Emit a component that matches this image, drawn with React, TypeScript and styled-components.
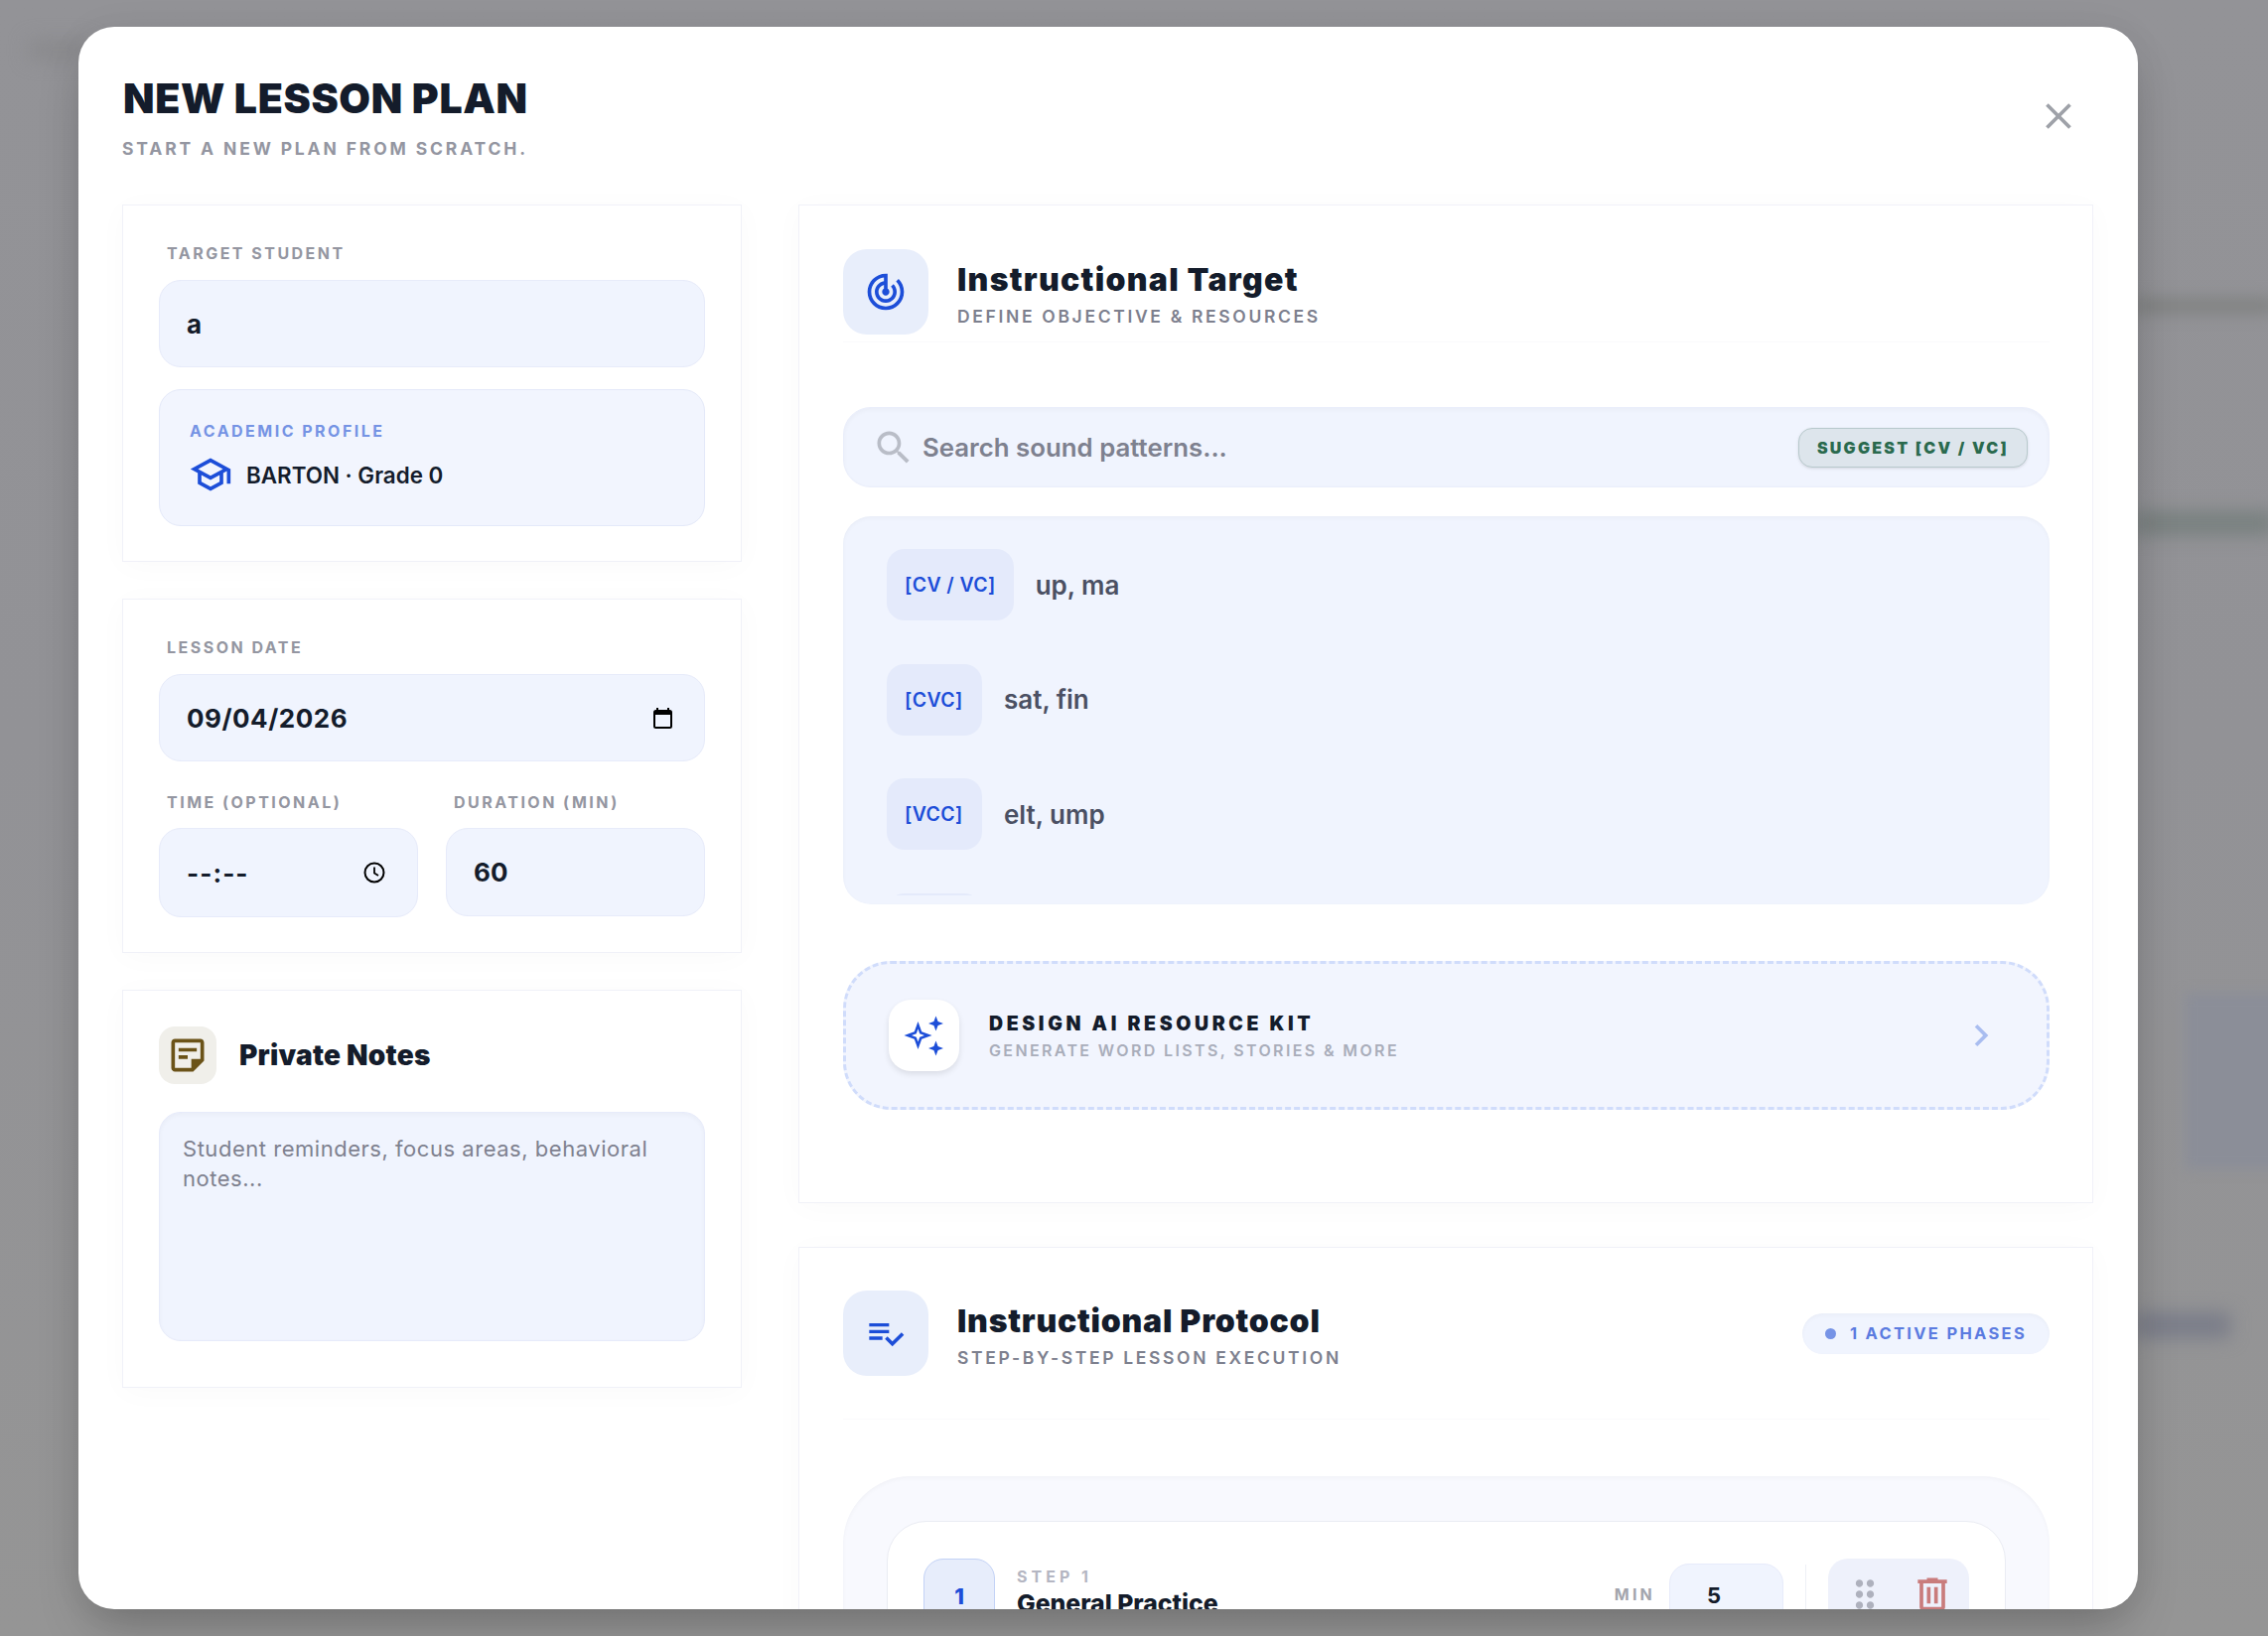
import styled, { createGlobalStyle } from 'styled-components';

const GlobalStyle = createGlobalStyle`
  html, body {
    margin: 0;
    padding: 0;
    background: #929296;
  }
  * {
    box-sizing: border-box;
  }
`;

const Page = styled.div`
  position: relative;
  width: 2284px;
  height: 1648px;
  padding: 27px 131px 27px 79px;
  overflow: hidden;
  background: linear-gradient(180deg, #939397 0%, #929296 45%, #959595 100%);
  font-family: Inter, 'Liberation Sans', sans-serif;
  color: #141c2b;
`;

const Smudge = styled.div<{ $top: number; $left: number; $w: number; $h: number; $color: string; $blur: number }>`
  position: absolute;
  top: ${({ $top }) => $top}px;
  left: ${({ $left }) => $left}px;
  width: ${({ $w }) => $w}px;
  height: ${({ $h }) => $h}px;
  background: ${({ $color }) => $color};
  filter: blur(${({ $blur }) => $blur}px);
`;

const Modal = styled.div`
  position: relative;
  height: 1594px;
  padding: 0 45px 0 44px;
  overflow: hidden;
  background: #fff;
  border-radius: 36px;
  box-shadow: 0 25px 50px -12px rgba(0, 0, 0, 0.25), 0 0 40px rgba(0, 0, 0, 0.04);
`;

const Header = styled.header`
  display: flex;
  justify-content: space-between;
  align-items: flex-start;
  height: 179px;
  padding-top: 47px;
`;

const ModalTitle = styled.h1`
  margin: 0 0 0 1px;
  font-size: 41px;
  font-weight: 900;
  line-height: 50px;
  letter-spacing: 0.016em;
  color: #141c2b;
  text-transform: uppercase;
`;

const ModalSubtitle = styled.p`
  margin: 14px 0 0;
  font-size: 17.5px;
  font-weight: 700;
  line-height: 24px;
  letter-spacing: 0.163em;
  color: #9496a1;
  text-transform: uppercase;
`;

const CloseButton = styled.button`
  display: flex;
  margin: 21px 13px 0 0;
  padding: 0;
  border: none;
  background: none;
  color: #9ea1a8;
`;

const Columns = styled.div`
  display: grid;
  grid-template-columns: 624px 1304px;
  gap: 57px;
  align-items: start;
`;

const Stack = styled.div<{ $gap: number }>`
  display: flex;
  flex-direction: column;
  gap: ${({ $gap }) => $gap}px;
`;

const Card = styled.section<{ $pad: string }>`
  padding: ${({ $pad }) => $pad};
  background: #fff;
  border: 1px solid #f0f1f8;
  box-shadow: 0 4px 30px rgba(0, 0, 0, 0.025);
`;

const FieldLabel = styled.div<{ $top?: number; $gap?: number }>`
  margin: ${({ $top }) => $top ?? 0}px 0 ${({ $gap }) => $gap ?? 15}px 8px;
  font-size: 16px;
  font-weight: 700;
  line-height: 24px;
  letter-spacing: 0.155em;
  color: #9496a1;
  text-transform: uppercase;
  white-space: nowrap;
`;

const Field = styled.div<{ $h: number }>`
  display: flex;
  align-items: center;
  justify-content: space-between;
  height: ${({ $h }) => $h}px;
  padding: 0 32px 0 27px;
  background: #f0f4fe;
  border: 1px solid #e7ebfa;
  border-radius: 22px;
  font-size: 26px;
  font-weight: 700;
  color: #141c2b;
`;

const DateText = styled.span<{ $spacing: number }>`
  font-size: 26px;
  font-weight: 700;
  letter-spacing: ${({ $spacing }) => $spacing}em;
`;

const FieldGrid = styled.div`
  display: grid;
  grid-template-columns: 261px 261px;
  gap: 28px;
`;

const ProfileBox = styled.div`
  height: 138px;
  margin-top: 22px;
  padding: 29px 30px 0;
  background: #f2f5fe;
  border: 1px solid #e4e9f9;
  border-radius: 22px;
`;

const ProfileLabel = styled.div`
  font-size: 16px;
  font-weight: 700;
  line-height: 24px;
  letter-spacing: 0.155em;
  color: #7593e4;
  text-transform: uppercase;
`;

const ProfileRow = styled.div`
  display: flex;
  align-items: center;
  gap: 14px;
  margin: 13px 0 0 -1px;
  font-size: 22.4px;
  font-weight: 600;
  color: #141c2b;
  svg {
    margin: -3px 0;
    color: #1d4ed8;
  }
`;

const NoteHead = styled.div`
  display: flex;
  align-items: center;
  gap: 23px;
  margin-bottom: 28px;
`;

const IconTile = styled.div<{ $size: number; $bg: string; $color: string; $radius: number }>`
  display: flex;
  flex: none;
  align-items: center;
  justify-content: center;
  width: ${({ $size }) => $size}px;
  height: ${({ $size }) => $size}px;
  background: ${({ $bg }) => $bg};
  border-radius: ${({ $radius }) => $radius}px;
  color: ${({ $color }) => $color};
`;

const NoteTitle = styled.h3`
  margin: 0;
  font-size: 28px;
  font-weight: 900;
  letter-spacing: 0.008em;
  color: #141c2b;
`;

const NoteArea = styled.div`
  height: 231px;
  margin-bottom: 10px;
  padding: 21px 23px;
  background: #f0f4fe;
  border: 1px solid #e7ebfa;
  border-radius: 22px;
  box-shadow: inset 0 2px 4px rgba(0, 0, 0, 0.03);
  font-size: 22px;
  line-height: 30px;
  letter-spacing: 0.024em;
  color: #7e818f;
`;

const SectionHead = styled.div<{ $pb: number }>`
  display: flex;
  align-items: center;
  gap: 29px;
  padding-bottom: ${({ $pb }) => $pb}px;
  border-bottom: 1px solid #fafafc;
`;

const HeadText = styled.div`
  flex: 1;
  margin-top: 4px;
`;

const SectionTitle = styled.h2<{ $spacing: number }>`
  margin: 0;
  font-size: 32px;
  font-weight: 900;
  line-height: 40px;
  letter-spacing: ${({ $spacing }) => $spacing}em;
  color: #141c2b;
`;

const SectionSub = styled.p`
  margin: 5px 0 0;
  font-size: 17.5px;
  font-weight: 600;
  line-height: 24px;
  letter-spacing: 0.152em;
  color: #7d808e;
  text-transform: uppercase;
`;

const SearchBar = styled.div`
  display: flex;
  align-items: center;
  height: 81px;
  margin-top: 65px;
  padding: 0 21px 0 28px;
  background: #f0f4fe;
  border: 1px solid #eaeefb;
  border-radius: 28px;
  box-shadow: inset 0 2px 4px rgba(0, 0, 0, 0.03);
  svg {
    color: #b9bdc7;
  }
`;

const SearchText = styled.span`
  flex: 1;
  margin-left: 7px;
  font-size: 25.8px;
  font-weight: 600;
  color: #7e818f;
`;

const SuggestButton = styled.button`
  height: 40px;
  padding: 0 18px;
  background: #dde5ec;
  border: 1px solid #b8c9cc;
  border-radius: 14px;
  box-shadow: 0 1px 3px rgba(0, 0, 0, 0.12);
  font-family: Inter, sans-serif;
  font-size: 16px;
  font-weight: 900;
  letter-spacing: 0.14em;
  color: #2a6a4e;
  white-space: nowrap;
`;

const PatternBox = styled.div`
  height: 391px;
  margin-top: 29px;
  padding: 33px 44px 9px;
  background: #f0f4fe;
  border-radius: 28px;
  box-shadow: inset 0 2px 4px rgba(0, 0, 0, 0.03);
`;

const PatternScroll = styled.div`
  display: flex;
  flex-direction: column;
  gap: 43.5px;
  height: 349px;
  overflow: hidden;
`;

const PatternRow = styled.div`
  display: flex;
  flex: none;
  align-items: center;
  gap: 22px;
`;

const PatternChip = styled.span`
  display: flex;
  align-items: center;
  min-width: 96px;
  height: 72px;
  padding: 0 18px;
  background: #e4eafb;
  border-radius: 18px;
  font-size: 19.5px;
  font-weight: 600;
  letter-spacing: 0.02em;
  color: #1d4ed8;
`;

const PatternWords = styled.span`
  font-size: 26px;
  font-weight: 600;
  color: #4b5063;
`;

const KitBanner = styled.div`
  display: flex;
  align-items: center;
  height: 150px;
  margin-top: 57px;
  margin-bottom: 93px;
  padding: 0 44px 0 43px;
  background: #f2f5fe;
  border: 3px dashed #d0dcfb;
  border-radius: 48px;
`;

const KitIcon = styled.div`
  display: flex;
  align-items: center;
  justify-content: center;
  width: 71px;
  height: 72px;
  margin-right: 30px;
  background: #fff;
  border-radius: 22px;
  box-shadow: 0 3px 6px rgba(0, 0, 0, 0.1);
  color: #1d4ed8;
`;

const KitText = styled.div`
  flex: 1;
`;

const KitTitle = styled.div`
  font-size: 19.5px;
  font-weight: 900;
  line-height: 26px;
  letter-spacing: 0.185em;
  color: #141c2b;
  text-transform: uppercase;
`;

const KitSub = styled.div`
  margin-top: 3px;
  font-size: 16px;
  font-weight: 600;
  line-height: 22px;
  letter-spacing: 0.148em;
  color: #a9adba;
  text-transform: uppercase;
`;

const PhasePill = styled.div`
  display: flex;
  align-items: center;
  gap: 14px;
  height: 41px;
  margin: 0;
  padding: 0 23px;
  background: #f0f4fe;
  border-radius: 21px;
  box-shadow: inset 0 2px 4px rgba(0, 0, 0, 0.03);
  font-size: 16.5px;
  font-weight: 700;
  letter-spacing: 0.14em;
  color: #5b7be0;
  text-transform: uppercase;
  white-space: nowrap;
`;

const PhaseDot = styled.span`
  width: 11px;
  height: 11px;
  background: #7693e6;
  border-radius: 50%;
`;

const StepsPanel = styled.div`
  margin-top: 57px;
  padding: 45px 44px 60px;
  background: #f8f9fe;
  border-radius: 68px;
  box-shadow: inset 0 2px 4px rgba(0, 0, 0, 0.03);
`;

const StepCard = styled.div`
  display: flex;
  align-items: flex-start;
  padding: 37px 36px 36px;
  background: #fff;
  border: 1px solid #eaecf3;
  border-radius: 40px;
`;

const StepBadge = styled.div`
  display: flex;
  align-items: center;
  justify-content: center;
  width: 72px;
  height: 72px;
  margin-right: 22px;
  padding-top: 4px;
  background: #e7edfb;
  border: 1px solid #c3d2f6;
  border-radius: 20px;
  font-size: 22px;
  font-weight: 800;
  color: #1d4ed8;
`;

const StepText = styled.div`
  flex: 1;
  padding-top: 6px;
`;

const StepLabel = styled.div`
  font-size: 16px;
  font-weight: 700;
  line-height: 24px;
  letter-spacing: 0.25em;
  color: #b4b6c2;
`;

const StepName = styled.div`
  margin-top: 0;
  font-size: 24.8px;
  font-weight: 800;
  color: #141c2b;
`;

const MinLabel = styled.span`
  margin: 24px 14px 0 0;
  font-size: 16px;
  font-weight: 700;
  line-height: 24px;
  letter-spacing: 0.2em;
  color: #a3a5ad;
`;

const MinField = styled.div`
  width: 115px;
  height: 72px;
  margin-top: 5px;
  padding: 18px 37px;
  background: #f0f4fe;
  border: 1px solid #e7ebfa;
  border-radius: 20px;
  font-size: 22px;
  font-weight: 700;
  color: #141c2b;
`;

const StepDivider = styled.span`
  width: 1px;
  height: 72px;
  margin: 6px 22px 0;
  background: #eef0f6;
`;

const StepActions = styled.div`
  display: flex;
  align-items: flex-start;
  justify-content: space-between;
  width: 142px;
  height: 80px;
  padding: 14px 15px 0 15px;
  background: #eef1fb;
  border-radius: 20px;
`;

const GripIcon = styled.span`
  display: flex;
  color: #aeb1bd;
`;

const TrashIcon = styled.span`
  display: flex;
  color: #c97c7c;
`;

const Chevron = styled.span`
  display: flex;
  color: #a9bdf0;
`;

function Glyph({ d, size = 44 }: { d: string; size?: number }) {
  return (
    <svg width={size} height={size} viewBox="0 0 24 24" fill="currentColor">
      <path d={d} fillRule="evenodd" />
    </svg>
  );
}

const ICONS = {
  close:
    'M19 6.41L17.59 5 12 10.59 6.41 5 5 6.41 10.59 12 5 17.59 6.41 19 12 13.41 17.59 19 19 17.59 13.41 12z',
  school:
    'M12 3L1 9l4 2.18v6L12 21l7-3.82v-6l2-1.09V17h2V9L12 3zm6.82 6L12 12.72 5.18 9 12 5.28 18.82 9zM17 15.99l-5 2.73-5-2.73v-3.72L12 15l5-2.73v3.72z',
  note: 'M19 3H5C3.9 3 3 3.9 3 5v14c0 1.1.9 2 2 2h10l6-6V5C21 3.9 20.1 3 19 3zM5 19V5h14v9h-5v5H5zM12 14H7v-2h5v2zM17 10H7V8h10v2z',
  target:
    'M19.07 4.93l-1.41 1.41C19.1 7.79 20 9.79 20 12c0 4.42-3.58 8-8 8s-8-3.58-8-8c0-4.08 3.05-7.44 7-7.93v2.02C8.16 6.57 6 9.03 6 12c0 3.31 2.69 6 6 6s6-2.69 6-6c0-1.66-.67-3.16-1.76-4.24l-1.41 1.41C15.55 9.9 16 10.9 16 12c0 2.21-1.79 4-4 4s-4-1.79-4-4c0-1.86 1.28-3.41 3-3.86v2.14c-.6.35-1 .98-1 1.72 0 1.1.9 2 2 2s2-.9 2-2c0-.74-.4-1.38-1-1.72V2h-1C6.48 2 2 6.48 2 12s4.48 10 10 10 10-4.48 10-10c0-2.76-1.12-5.26-2.93-7.07z',
  search:
    'M15.5 14h-.79l-.28-.27C15.41 12.59 16 11.11 16 9.5 16 5.91 13.09 3 9.5 3S3 5.91 3 9.5 5.91 16 9.5 16c1.61 0 3.09-.59 4.23-1.57l.27.28v.79l5 4.99L20.49 19l-4.99-5zm-6 0C7.01 14 5 11.99 5 9.5S7.01 5 9.5 5 14 7.01 14 9.5 11.99 14 9.5 14z',
  chevron: 'M10 6L8.59 7.41 13.17 12l-4.58 4.59L10 18l6-6z',
  checklist:
    'M14 10H2v2h12v-2zm0-4H2v2h12V6zM2 16h8v-2H2v2zm19.5-4.5L23 13l-6.99 7-4.51-4.5L13 14l3.01 3 5.49-5.5z',
  grip: 'M11 18c0 1.1-.9 2-2 2s-2-.9-2-2 .9-2 2-2 2 .9 2 2zm-2-8c-1.1 0-2 .9-2 2s.9 2 2 2 2-.9 2-2-.9-2-2-2zm0-6c-1.1 0-2 .9-2 2s.9 2 2 2 2-.9 2-2-.9-2-2-2zm6 4c1.1 0 2-.9 2-2s-.9-2-2-2-2 .9-2 2 .9 2 2 2zm0 2c-1.1 0-2 .9-2 2s.9 2 2 2 2-.9 2-2-.9-2-2-2zm0 6c-1.1 0-2 .9-2 2s.9 2 2 2 2-.9 2-2-.9-2-2-2z',
  trash:
    'M7 21q-.825 0-1.412-.587Q5 19.825 5 19V6H4V4h5V3h6v1h5v2h-1v13q0 .825-.587 1.413Q17.825 21 17 21zM17 6H7v13h10V6zM9 17h2V8H9v9zm4 0h2V8h-2v9z',
};

function Sparkles() {
  return (
    <svg width="44" height="44" viewBox="0 0 44 44" fill="currentColor">
      <path
        fillRule="evenodd"
        d="M15.5 8L19.2 18.3 29.5 22 19.2 25.7 15.5 36 11.8 25.7 1.5 22 11.8 18.3zM15.5 15.5L13.8 20.3 9 22 13.8 23.7 15.5 28.5 17.2 23.7 22 22 17.2 20.3z"
      />
      <path d="M33.5 2.5L35.6 7.9 41 10 35.6 12.1 33.5 17.5 31.4 12.1 26 10 31.4 7.9z" />
      <path d="M33.5 27.5L35.6 32.9 41 35 35.6 37.1 33.5 42.5 31.4 37.1 26 35 31.4 32.9z" />
    </svg>
  );
}

function CalendarGlyph() {
  return (
    <svg width="19" height="21" viewBox="0 0 19 21" fill="none">
      <path d="M4 0v3M15 0v3" stroke="#000" strokeWidth="2" />
      <rect x="1" y="3" width="17" height="17" rx="1.5" stroke="#000" strokeWidth="2" />
      <rect x="1" y="3" width="17" height="4" fill="#000" />
    </svg>
  );
}

function ClockGlyph() {
  return (
    <svg width="22" height="22" viewBox="0 0 22 22" fill="none" stroke="#000" strokeWidth="2">
      <circle cx="11" cy="11" r="9.5" />
      <path d="M11 5.5V11.5L15 14" strokeWidth="1.8" />
    </svg>
  );
}

const PATTERNS = [
  { tag: '[CV / VC]', words: 'up, ma' },
  { tag: '[CVC]', words: 'sat, fin' },
  { tag: '[VCC]', words: 'elt, ump' },
];

export default function App() {
  return (
    <Page>
      <GlobalStyle />
      <Smudge $top={301} $left={2150} $w={140} $h={14} $color="#7e807f" $blur={8} />
      <Smudge $top={515} $left={2150} $w={140} $h={24} $color="#78807f" $blur={9} />
      <Smudge $top={1000} $left={2200} $w={100} $h={178} $color="#8b8e98" $blur={6} />
      <Smudge $top={1322} $left={2150} $w={96} $h={26} $color="#7a7d89" $blur={9} />
      <Smudge $top={42} $left={30} $w={60} $h={16} $color="#87878a" $blur={10} />

      <Modal>
        <Header>
          <div>
            <ModalTitle>New Lesson Plan</ModalTitle>
            <ModalSubtitle>Start a new plan from scratch.</ModalSubtitle>
          </div>
          <CloseButton aria-label="Close">
            <Glyph d={ICONS.close} />
          </CloseButton>
        </Header>

        <Columns>
          <Stack $gap={37}>
            <Card $pad="36px 36px 35px">
              <FieldLabel>Target Student</FieldLabel>
              <Field $h={88}>a</Field>
              <ProfileBox>
                <ProfileLabel>Academic Profile</ProfileLabel>
                <ProfileRow>
                  <Glyph d={ICONS.school} />
                  BARTON · Grade 0
                </ProfileRow>
              </ProfileBox>
            </Card>

            <Card $pad="36px 36px 35px">
              <FieldLabel>Lesson Date</FieldLabel>
              <Field $h={88}>
                <DateText $spacing={0.02}>09/04/2026</DateText>
                <CalendarGlyph />
              </Field>
              <FieldGrid>
                <div>
                  <FieldLabel $top={29} $gap={14}>
                    Time (Optional)
                  </FieldLabel>
                  <Field $h={90}>
                    <DateText $spacing={0.04}>--:--</DateText>
                    <ClockGlyph />
                  </Field>
                </div>
                <div>
                  <FieldLabel $top={29} $gap={14}>
                    Duration (Min)
                  </FieldLabel>
                  <Field $h={89}>
                    <DateText $spacing={0}>60</DateText>
                  </Field>
                </div>
              </FieldGrid>
            </Card>

            <Card $pad="36px">
              <NoteHead>
                <IconTile $size={58} $bg="#f0efea" $color="#6b5318" $radius={16}>
                  <Glyph d={ICONS.note} />
                </IconTile>
                <NoteTitle>Private Notes</NoteTitle>
              </NoteHead>
              <NoteArea>Student reminders, focus areas, behavioral notes...</NoteArea>
            </Card>
          </Stack>

          <Stack $gap={44}>
            <Card $pad="44px 43px 0 44px">
              <SectionHead $pb={7}>
                <IconTile $size={86} $bg="#e8eefb" $color="#1d4ed8" $radius={24}>
                  <Glyph d={ICONS.target} />
                </IconTile>
                <HeadText>
                  <SectionTitle $spacing={0.04}>Instructional Target</SectionTitle>
                  <SectionSub>Define objective &amp; resources</SectionSub>
                </HeadText>
              </SectionHead>

              <SearchBar>
                <Glyph d={ICONS.search} />
                <SearchText>Search sound patterns...</SearchText>
                <SuggestButton>SUGGEST [CV / VC]</SuggestButton>
              </SearchBar>

              <PatternBox>
                <PatternScroll>
                  {PATTERNS.map((p) => (
                    <PatternRow key={p.tag}>
                      <PatternChip>{p.tag}</PatternChip>
                      <PatternWords>{p.words}</PatternWords>
                    </PatternRow>
                  ))}
                  <PatternRow>
                    <PatternChip />
                  </PatternRow>
                </PatternScroll>
              </PatternBox>

              <KitBanner>
                <KitIcon>
                  <Sparkles />
                </KitIcon>
                <KitText>
                  <KitTitle>Design AI Resource Kit</KitTitle>
                  <KitSub>Generate word lists, stories &amp; more</KitSub>
                </KitText>
                <Chevron>
                  <Glyph d={ICONS.chevron} />
                </Chevron>
              </KitBanner>
            </Card>

            <Card $pad="43px 43px 0 44px">
              <SectionHead $pb={43}>
                <IconTile $size={86} $bg="#e8eefb" $color="#1d4ed8" $radius={24}>
                  <Glyph d={ICONS.checklist} size={40} />
                </IconTile>
                <HeadText>
                  <SectionTitle $spacing={0.024}>Instructional Protocol</SectionTitle>
                  <SectionSub>Step-by-step lesson execution</SectionSub>
                </HeadText>
                <PhasePill>
                  <PhaseDot />1 Active Phases
                </PhasePill>
              </SectionHead>

              <StepsPanel>
                <StepCard>
                  <StepBadge>1</StepBadge>
                  <StepText>
                    <StepLabel>STEP 1</StepLabel>
                    <StepName>General Practice</StepName>
                  </StepText>
                  <MinLabel>MIN</MinLabel>
                  <MinField>5</MinField>
                  <StepDivider />
                  <StepActions>
                    <GripIcon>
                      <Glyph d={ICONS.grip} />
                    </GripIcon>
                    <TrashIcon>
                      <Glyph d={ICONS.trash} />
                    </TrashIcon>
                  </StepActions>
                </StepCard>
              </StepsPanel>
            </Card>
          </Stack>
        </Columns>
      </Modal>
    </Page>
  );
}
